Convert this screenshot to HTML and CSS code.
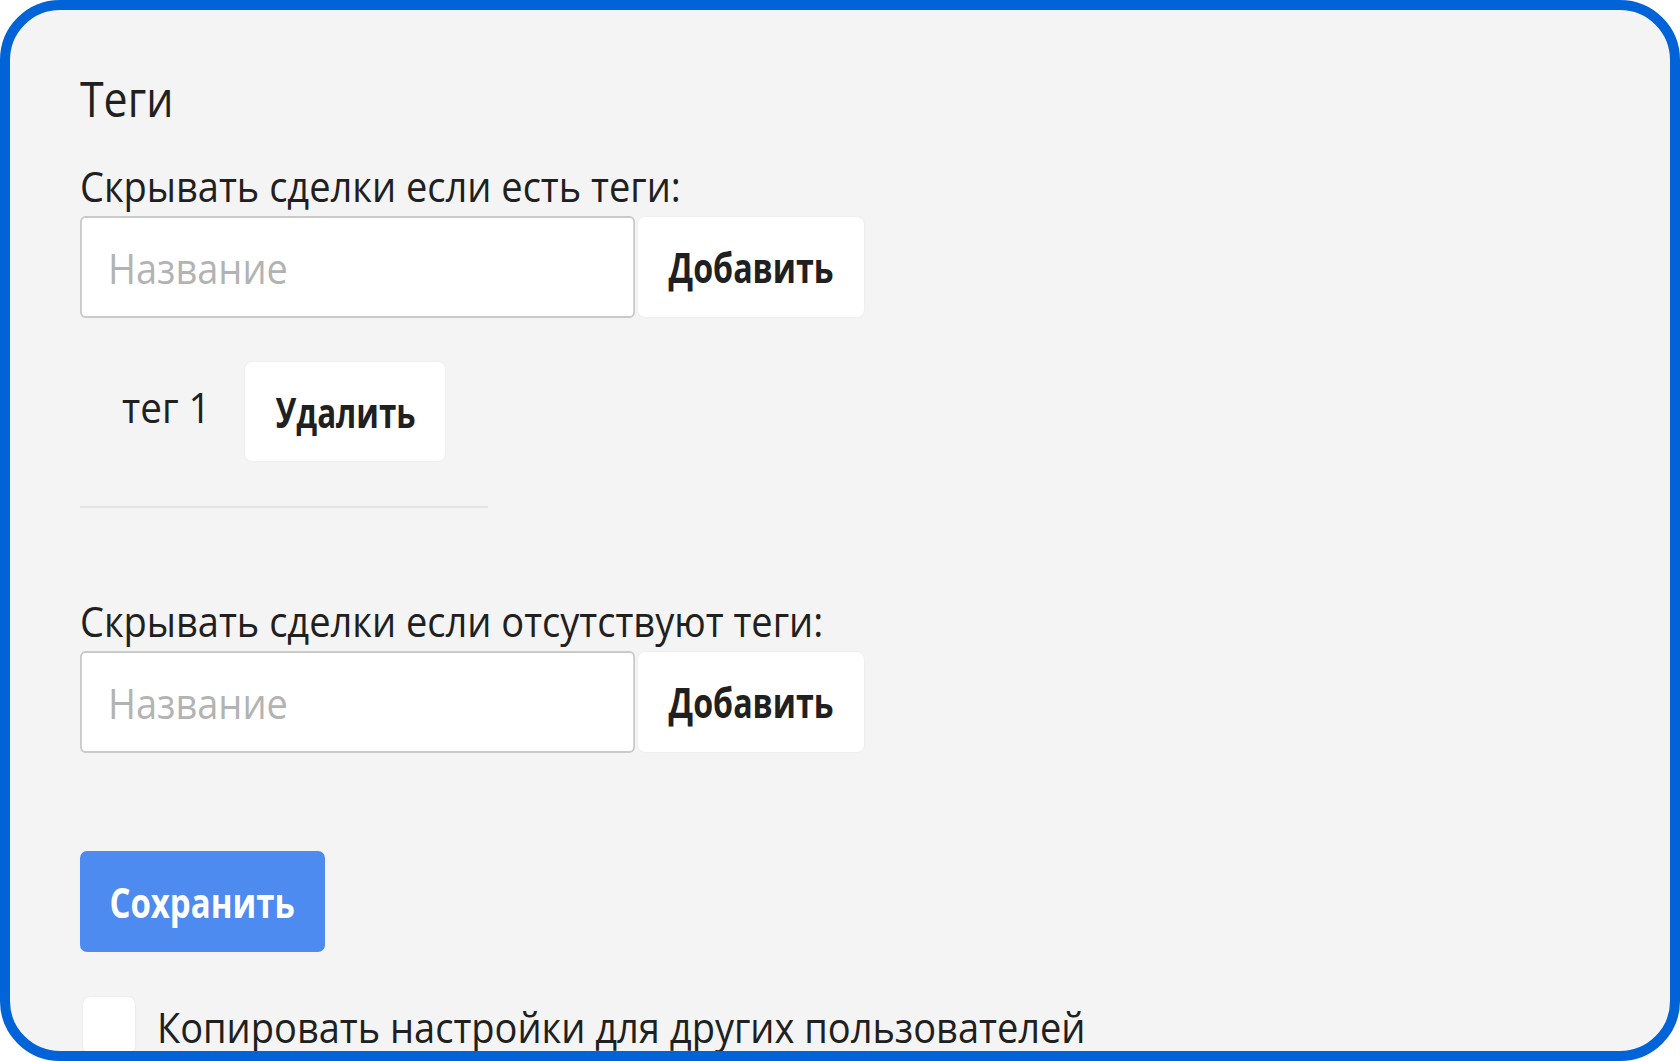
FILE: index.html
```html
<!DOCTYPE html>
<html lang="ru">
<head>
<meta charset="utf-8">
<title>Теги</title>
<link rel="stylesheet" href="styles.css">
</head>
<body>
<div class="frame">
  <div class="content">
    <h2 class="title"><span class="sx sx-title">Теги</span></h2>

    <div class="group">
      <div class="label"><span class="sx">Скрывать сделки если есть теги:</span></div>
      <div class="add-row">
        <div class="field-wrap">
          <input class="field" type="text" placeholder="Название">
        </div>
        <button class="btn btn-light btn-add"><span class="bx">Добавить</span></button>
      </div>
      <div class="tag-row">
        <span class="tag-name"><span class="sx">тег 1</span></span>
        <button class="btn btn-light btn-del"><span class="bx">Удалить</span></button>
      </div>
    </div>

    <hr class="divider">

    <div class="group group-2">
      <div class="label"><span class="sx">Скрывать сделки если отсутствуют теги:</span></div>
      <div class="add-row">
        <div class="field-wrap">
          <input class="field" type="text" placeholder="Название">
        </div>
        <button class="btn btn-light btn-add"><span class="bx">Добавить</span></button>
      </div>
    </div>

    <button class="btn btn-primary"><span class="bx">Сохранить</span></button>

    <label class="check-row">
      <span class="checkbox"></span>
      <span class="check-text"><span class="sx">Копировать настройки для других пользователей</span></span>
    </label>
  </div>
</div>
</body>
</html>
```

FILE: styles.css
```css
* { box-sizing: border-box; }
html, body { margin: 0; padding: 0; background: #ffffff; }
body {
  width: 1680px;
  height: 1061px;
  overflow: hidden;
  font-family: "Open Sans", "Noto Sans", sans-serif;
  color: #202020;
}

/* horizontally narrowed text, matching the compressed look of the reference */
.sx {
  display: inline-block;
  white-space: nowrap;
  transform: scaleX(0.905);
  transform-origin: 0 50%;
}
.sx-title { transform: scaleX(0.875); }

.bx {
  display: inline-block;
  white-space: nowrap;
  transform: scaleX(0.785);
  transform-origin: 50% 50%;
}

.frame {
  position: relative;
  width: 1680px;
  height: 1061px;
  border: 10px solid #0063d8;
  border-radius: 60px;
  background: #f4f4f4;
  overflow: hidden;
}

.content {
  padding: 58px 0 0 70px;
  display: flex;
  flex-direction: column;
  align-items: flex-start;
}

.title {
  margin: 0;
  font-weight: 400;
  font-size: 49px;
  line-height: 60px;
  color: #202020;
}

.group { display: flex; flex-direction: column; align-items: flex-start; }

.label { margin-top: 28px; font-size: 42px; line-height: 60px; white-space: nowrap; }

.add-row { display: flex; gap: 3px; }

.field-wrap { flex: none; width: 555px; height: 102px; }
.field {
  display: block;
  width: 614px;
  height: 102px;
  border: 2px solid #c9c9c9;
  border-radius: 6px;
  background: #fff;
  padding: 0 29px;
  font-family: inherit;
  font-size: 42px;
  color: #333;
  outline: none;
  transform: scaleX(0.904);
  transform-origin: 0 0;
}
.field::placeholder { color: #b3b3b3; }

.btn {
  font-family: inherit;
  font-weight: 700;
  font-size: 41px;
  border: none;
  padding: 0;
  overflow: hidden;
  cursor: pointer;
}
.btn-light {
  background: #fff;
  color: #202020;
  border-radius: 7px;
  box-shadow: 0 0 2px rgba(0, 0, 0, 0.08);
}
.btn-add { width: 226px; height: 100px; margin-top: 1px; }

.tag-row { display: flex; align-items: center; margin-top: 44px; padding-left: 42px; }
.tag-name { width: 86px; margin-right: 37px; padding-bottom: 10px; font-size: 42px; white-space: nowrap; }
.tag-name .sx { transform: scaleX(0.92); }
.btn-del { width: 200px; height: 99px; }
.btn-del .bx { transform: scaleX(0.765); }

.divider { width: 408px; margin: 45px 0 0; border: 0; border-top: 2px solid #e4e4e4; }

.group-2 .label { margin-top: 83px; }

.btn-primary {
  margin-top: 98px;
  width: 245px;
  height: 101px;
  background: #4d8bf0;
  color: #fff;
  font-size: 42px;
  border-radius: 7px;
}

.check-row { display: flex; align-items: flex-start; margin-top: 45px; gap: 22px; padding-left: 3px; }
.checkbox {
  flex: none;
  width: 52px;
  height: 56px;
  background: #fff;
  border-radius: 7px;
  box-shadow: 0 0 2px rgba(0, 0, 0, 0.1);
}
.check-text { font-size: 42px; line-height: 60px; white-space: nowrap; }
```
